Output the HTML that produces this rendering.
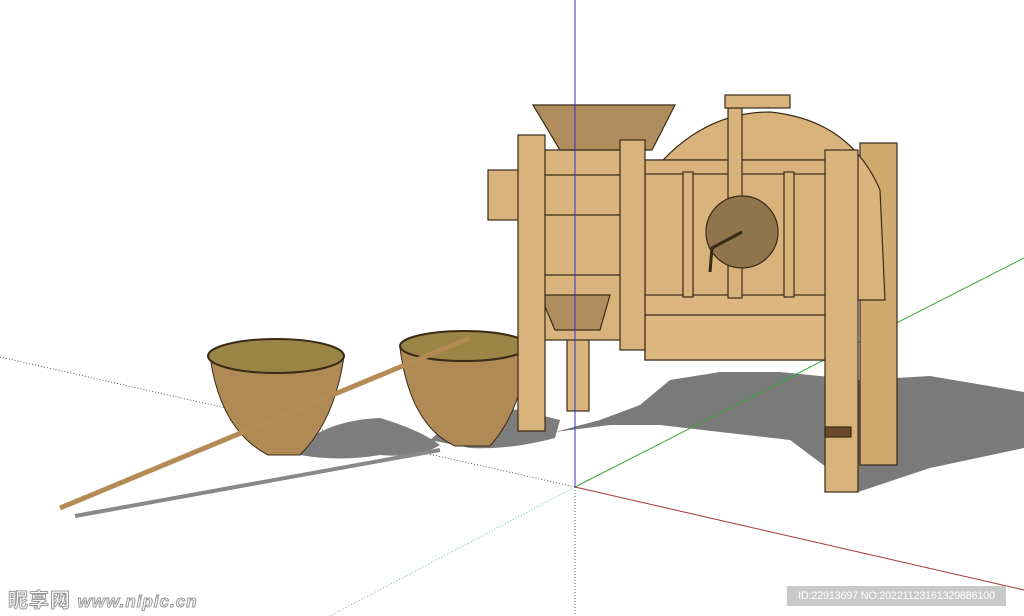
<!DOCTYPE html>
<html><head><meta charset="utf-8"><style>
html,body{margin:0;padding:0;background:#fff;width:1024px;height:616px;overflow:hidden;position:relative;font-family:"Liberation Sans","Noto Sans CJK SC",sans-serif}
svg{position:absolute;left:0;top:0}
.wm{position:absolute;left:8px;top:584px;font-size:20px;font-weight:bold;color:#fff;-webkit-text-stroke:1px #999;letter-spacing:1px}
.wm span{font-size:17px;font-style:italic}
.id{position:absolute;left:787px;top:586px;width:219px;height:20px;background:#c9c9c9;color:#fff;font-size:11px;line-height:20px;text-align:center;letter-spacing:-0.3px}
</style></head><body>
<svg width="1024" height="616" viewBox="0 0 1024 616">
<line x1="0" y1="357" x2="575" y2="487" stroke="#333" stroke-width="0.8" stroke-dasharray="1,2"/>
<line x1="575" y1="487" x2="330" y2="616" stroke="#5a8" stroke-width="0.8" stroke-dasharray="1,2"/>
<line x1="575" y1="487" x2="575" y2="616" stroke="#336" stroke-width="0.8" stroke-dasharray="1,2"/>
<path d="M555,432 L600,420 L640,405 L670,380 L720,372 L780,372 L860,380 L930,376 L1024,392 L1024,448 L930,468 L858,492 L830,470 L790,440 L720,432 L660,425 L610,425 Z" fill="#7a7a7a"/>
<path d="M300,445 Q330,420 380,418 Q420,430 440,445 Q420,458 380,455 Q340,462 300,455 Z" fill="#7d7d7d"/>
<path d="M430,440 Q470,405 520,410 L560,420 L555,438 Q510,450 470,448 Z" fill="#7d7d7d"/>
<line x1="75" y1="516" x2="440" y2="450" stroke="#888" stroke-width="4"/>
<line x1="575" y1="487" x2="1024" y2="258" stroke="#3a3" stroke-width="1"/>
<line x1="575" y1="487" x2="1024" y2="590" stroke="#a33" stroke-width="1"/>
<path d="M210,356 Q220,430 268,455 L300,455 Q335,420 344,356 Z" fill="#b08a55" stroke="#3a2a18"/>
<ellipse cx="276" cy="356" rx="68" ry="17" fill="#9a8546" stroke="#3a2a18" stroke-width="2"/>
<path d="M400,348 Q410,425 455,446 L490,446 Q522,410 528,348 Z" fill="#b08a55" stroke="#3a2a18"/>
<ellipse cx="464" cy="346" rx="64" ry="15" fill="#9a8546" stroke="#3a2a18" stroke-width="2"/>
<line x1="60" y1="508" x2="470" y2="338" stroke="#b38c55" stroke-width="5"/>
<g stroke="#3a2a18" stroke-width="1.2" fill="#d8b47c">
<rect x="488" y="170" width="34" height="50"/>
<rect x="567" y="335" width="22" height="76"/>
<rect x="860" y="143" width="37" height="322" fill="#cfa96e"/>
<path d="M650,175 Q700,112 770,112 Q850,120 880,190 L885,300 L850,300 L650,300 Z" fill="#d8b47c"/>
<rect x="538" y="150" width="86" height="190"/>
<rect x="645" y="160" width="190" height="200"/>
<rect x="645" y="295" width="190" height="65" fill="#dcb880"/>
<line x1="645" y1="315" x2="835" y2="315"/>
<line x1="538" y1="175" x2="624" y2="175"/><line x1="538" y1="215" x2="624" y2="215"/><line x1="538" y1="275" x2="624" y2="275"/>
<rect x="645" y="160" width="190" height="14"/>
<rect x="683" y="172" width="10" height="125"/><rect x="728" y="108" width="14" height="190"/><rect x="784" y="172" width="10" height="125"/>
<circle cx="742" cy="232" r="36" fill="#8f744c"/>
<path d="M742,232 L712,248 L710,272" fill="none" stroke="#3a2a18" stroke-width="3"/>
<rect x="725" y="95" width="65" height="13"/>
<path d="M533,105 L675,105 L652,150 L560,150 Z" fill="#b08d5c"/>
<path d="M540,295 L610,295 L600,330 L555,330 Z" fill="#b08d5c"/>
<rect x="518" y="135" width="27" height="296"/>
<rect x="620" y="140" width="25" height="210"/>
<rect x="825" y="150" width="33" height="342"/>
<rect x="825" y="427" width="26" height="10" fill="#6a4a28"/>
</g>
<line x1="575" y1="0" x2="575" y2="487" stroke="#33c" stroke-width="1"/>
</svg>
<div class="wm">昵享网 <span>www.nipic.cn</span></div>
<div class="id">ID:22913697 NO:20221123161329886100</div>
</body></html>
